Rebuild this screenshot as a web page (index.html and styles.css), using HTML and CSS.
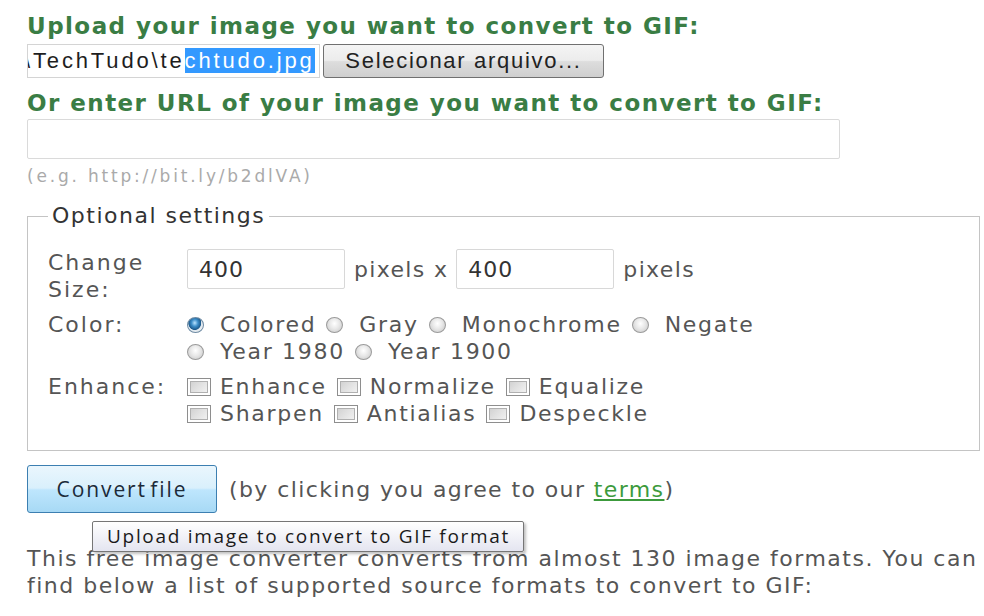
FILE: index.html
```html
<!DOCTYPE html>
<html lang="en">
<head>
<meta charset="utf-8">
<title>Convert image to GIF</title>
<link rel="stylesheet" href="styles.css">
</head>
<body>
<div class="page">
  <h2 class="title">Upload your image you want to convert to GIF:</h2>
  <div class="file-row">
    <div class="file-field"><span class="file-text">\TechTudo\te<span class="sel">chtudo.jpg</span></span></div>
    <button class="browse" type="button">Selecionar arquivo...</button>
  </div>
  <h2 class="title title-url">Or enter URL of your image you want to convert to GIF:</h2>
  <input class="url" type="text">
  <div class="hint">(e.g. http://bit.ly/b2dlVA)</div>

  <fieldset class="settings">
    <legend>Optional settings</legend>
    <div class="grid">
      <div class="lbl">Change<br>Size:</div>
      <div class="size">
        <input class="num" type="text" value="400">
        <span class="unit">pixels x</span>
        <input class="num" type="text" value="400">
        <span class="unit">pixels</span>
      </div>

      <div class="lbl">Color:</div>
      <div class="opts">
        <div class="line">
          <label class="opt"><input class="radio" type="radio" name="c" checked>Colored</label>
          <label class="opt"><input class="radio" type="radio" name="c">Gray</label>
          <label class="opt"><input class="radio" type="radio" name="c">Monochrome</label>
          <label class="opt"><input class="radio" type="radio" name="c">Negate</label>
        </div>
        <div class="line">
          <label class="opt"><input class="radio" type="radio" name="c">Year 1980</label>
          <label class="opt"><input class="radio" type="radio" name="c">Year 1900</label>
        </div>
      </div>

      <div class="lbl">Enhance:</div>
      <div class="opts">
        <div class="line">
          <label class="opt"><input class="check" type="checkbox">Enhance</label>
          <label class="opt"><input class="check" type="checkbox">Normalize</label>
          <label class="opt"><input class="check" type="checkbox">Equalize</label>
        </div>
        <div class="line">
          <label class="opt"><input class="check" type="checkbox">Sharpen</label>
          <label class="opt"><input class="check" type="checkbox">Antialias</label>
          <label class="opt"><input class="check" type="checkbox">Despeckle</label>
        </div>
      </div>
    </div>
  </fieldset>

  <div class="submit-row">
    <button class="convert" type="button">Convert file</button>
    <span class="agree">(by clicking you agree to our <a class="terms" href="#">terms</a>)</span>
  </div>

  <div class="tooltip">Upload image to convert to GIF format</div>

  <p class="intro">This free image converter converts from almost 130 image formats. You can<br>find below a list of supported source formats to convert to GIF:</p>
</div>
</body>
</html>
```

FILE: styles.css
```css
* { box-sizing: border-box; }

body {
  margin: 0;
  background: #ffffff;
  font-family: "DejaVu Sans", Verdana, sans-serif;
  color: #555555;
}

.page {
  position: relative;
  width: 984px;
  height: 616px;
  overflow: hidden;
  padding-left: 27px;
}

.title {
  margin: 11px 0 0;
  font-size: 23px;
  line-height: 30px;
  font-weight: bold;
  color: #3a7d44;
  letter-spacing: 1.45px;
  white-space: nowrap;
}

.title-url { margin-top: 10px; }

.file-row {
  display: flex;
  gap: 3px;
  height: 34px;
  margin-top: 3px;
}

.file-field {
  width: 293px;
  height: 34px;
  border: 1px solid #d4d4d4;
  overflow: hidden;
  white-space: nowrap;
  padding-left: 3px;
  font-family: "Liberation Sans", Arial, sans-serif;
  font-size: 22px;
  line-height: 32px;
  letter-spacing: 2.85px;
  color: #1e1e1e;
}

.file-text { display: inline-block; margin-left: -7px; }

.sel { background: #3399ff; color: #ffffff; }

.browse {
  width: 281px;
  height: 34px;
  padding: 0;
  border: 1px solid #707070;
  border-radius: 3px;
  background: linear-gradient(#f4f4f4 0%, #ececec 48%, #dddddd 52%, #cfcfcf 100%);
  font-family: "Liberation Sans", Arial, sans-serif;
  font-size: 22px;
  letter-spacing: 1.7px;
  color: #222222;
}

.url {
  display: block;
  width: 813px;
  height: 40px;
  margin: 1px 0 0;
  border: 1px solid #dadada;
  border-radius: 2px;
  background: #ffffff;
}

.hint {
  margin-top: 6px;
  font-size: 17px;
  line-height: 22px;
  letter-spacing: 2.8px;
  color: #aaaaaa;
}

.settings {
  width: 953px;
  margin: 17px 0 0;
  padding: 21px 20px 23px 20px;
  border: 1px solid #c4c4c4;
  min-inline-size: 0;
}

.settings legend {
  padding: 0 4px;
  font-size: 22px;
  line-height: 24px;
  letter-spacing: 1.5px;
  color: #333333;
}

.grid {
  display: grid;
  grid-template-columns: 139px 1fr;
  row-gap: 8px;
  font-size: 22px;
  line-height: 27px;
  letter-spacing: 2px;
}

.size {
  display: flex;
  align-items: center;
  height: 40px;
}

.num {
  width: 158px;
  height: 40px;
  border: 1px solid #d8d8d8;
  border-radius: 2px;
  padding: 0 0 0 11px;
  font-family: "DejaVu Sans", Verdana, sans-serif;
  font-size: 22px;
  letter-spacing: 1px;
  color: #333333;
}

.unit { margin: 0 8px 0 9px; letter-spacing: 1.35px; }

.opts { letter-spacing: 1.7px; }

.line {
  display: flex;
  align-items: center;
  height: 27px;
}

.opt {
  display: flex;
  align-items: center;
  margin-right: 10px;
}

.radio {
  appearance: none;
  -webkit-appearance: none;
  width: 17px;
  height: 16px;
  margin: 0 16px 0 0;
  border-radius: 50%;
  border: 1px solid #9a9a9a;
  background: radial-gradient(ellipse at 50% 40%, #ffffff 0%, #e8e8e8 45%, #c4c4c4 100%);
}

.radio:checked {
  border-color: #6d8aa3;
  background: radial-gradient(ellipse at 45% 35%, #b9e3ff 0%, #3c8dc8 28%, #1d5a8c 52%, #dfe8ef 58%, #f3f3f3 80%, #cfd6dc 100%);
}

.check {
  appearance: none;
  -webkit-appearance: none;
  width: 24px;
  height: 18px;
  margin: 0 9px 0 0;
  border: 1px solid #8e8e8e;
  background: #ffffff;
  box-shadow: inset 0 0 0 2px #ffffff, inset 0 0 0 3px #b0b0b0;
  background-image: linear-gradient(135deg, #cbcbcb 0%, #e2e2e2 50%, #f7f7f7 100%);
}

.submit-row {
  display: flex;
  align-items: center;
  margin-top: 14px;
  height: 48px;
}

.convert {
  width: 190px;
  height: 48px;
  flex: none;
  padding: 0;
  border: 1px solid #3c7fb1;
  border-radius: 3px;
  background: linear-gradient(#eaf6fd 0%, #d9f0fc 48%, #bee6fd 52%, #a7d9f5 100%);
  font-family: "Open Sans", "Segoe UI", sans-serif;
  font-size: 21px;
  letter-spacing: 1.9px;
  word-spacing: -4px;
  color: #1c2a38;
}

.agree {
  margin-left: 12px;
  font-size: 22px;
  line-height: 27px;
  letter-spacing: 1.4px;
  color: #555555;
}

.terms { color: #3c9a3c; text-decoration: underline; }

.tooltip {
  position: absolute;
  left: 92px;
  top: 521px;
  width: 432px;
  height: 31px;
  padding-left: 14px;
  border: 1px solid #767676;
  border-radius: 2px;
  background: linear-gradient(#ffffff 0%, #e4e5f0 100%);
  box-shadow: 2px 2px 3px rgba(0, 0, 0, 0.25);
  font-family: "Open Sans", "Segoe UI", sans-serif;
  font-size: 19px;
  line-height: 29px;
  letter-spacing: 1.7px;
  color: #1a1a1a;
  white-space: nowrap;
}

.intro {
  margin: 32px 0 0;
  font-size: 22px;
  line-height: 27px;
  letter-spacing: 1.5px;
  color: #555555;
  white-space: nowrap;
}
```
